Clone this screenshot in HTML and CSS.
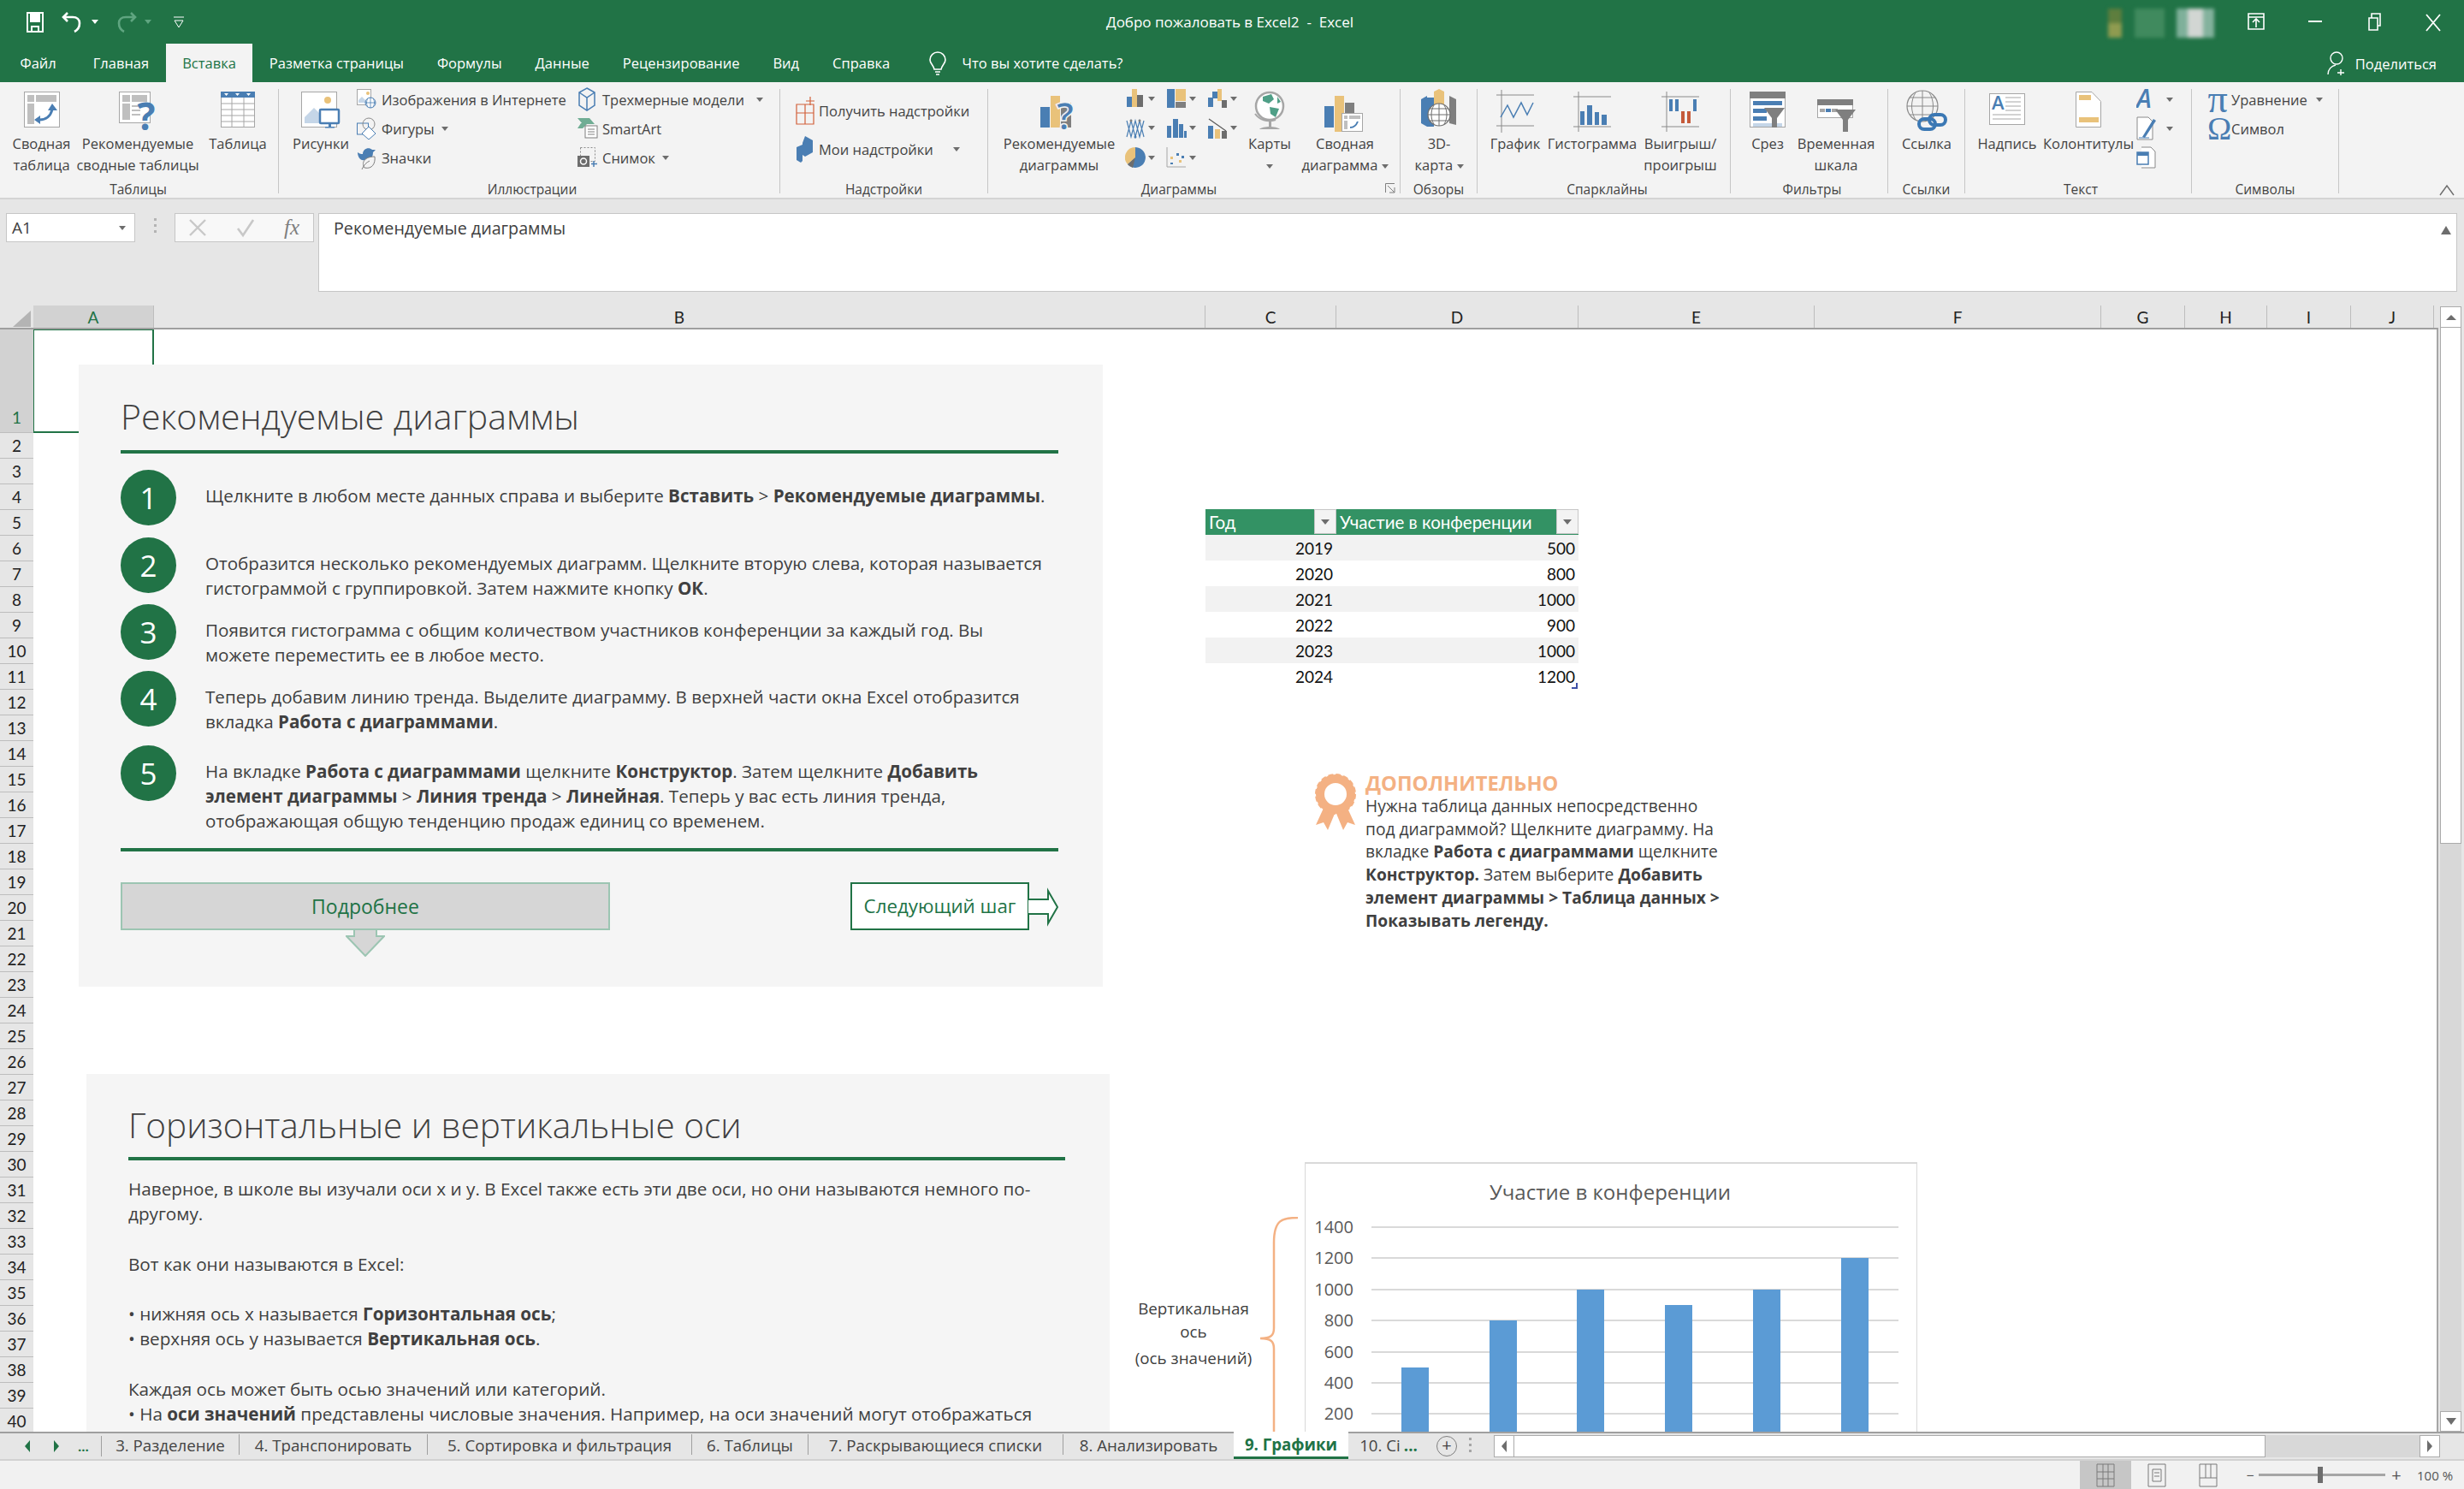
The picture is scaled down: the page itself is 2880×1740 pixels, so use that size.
FILE: index.html
```html
<!DOCTYPE html>
<html lang="ru">
<head>
    <meta charset="UTF-8">
    <title>Добро пожаловать в Excel2 - Excel</title>
    <link rel="stylesheet" href="styles.css">
</head>
<body>
    <!-- title bar -->
    <div class="titlebar">
        <div class="qat">
            <svg width="22" height="26" viewBox="0 0 22 26"><path d="M2 2h18v22H2z" fill="none" stroke="#fff" stroke-width="2"/><path d="M5 2h12v11H5z" fill="#fff"/><path d="M7 18h8v6H7z" fill="none" stroke="#fff" stroke-width="2"/></svg>
            <svg width="26" height="28" viewBox="0 0 26 28"><path d="M7 3 2 8l5 5M3 8h10c5 0 8 3 8 7s-2 8-6 10" fill="none" stroke="#fff" stroke-width="2.6"/></svg>
            <span class="caret caret-white"></span>
            <svg class="qat-dim" width="26" height="28" viewBox="0 0 26 28"><path d="M19 3l5 5-5 5M23 8H13C8 8 5 11 5 15s2 8 6 10" fill="none" stroke="#5fa580" stroke-width="2.6"/></svg>
            <span class="caret caret-dim"></span>
            <svg class="qat-more" width="14" height="14" viewBox="0 0 14 14"><path d="M1 1h12M2 5h10L7 13z" fill="none" stroke="#fff"/></svg>
        </div>
        <div class="doc-title">Добро пожаловать в Excel2&nbsp; - &nbsp;Excel</div>
        <div class="account">
            <span class="blur blur-a"></span>
            <span class="blur blur-b"></span>
            <span class="blur blur-c"></span>
        </div>
        <div class="win-btns">
            <svg width="22" height="22" viewBox="0 0 22 22"><path d="M2 2h18v18H2zM2 6h18M11 18V9M7 12l4-4 4 4" fill="none" stroke="#fff" stroke-width="1.6"/></svg>
            <svg width="22" height="22" viewBox="0 0 22 22"><path d="M3 11h16" stroke="#fff" stroke-width="2"/></svg>
            <svg width="22" height="22" viewBox="0 0 22 22"><path d="M5 7h10v14H5zM8 7V2h10v14h-3" fill="none" stroke="#fff" stroke-width="1.6"/></svg>
            <svg width="22" height="24" viewBox="0 0 22 24"><path d="M3 3l16 19M19 3 3 22" stroke="#fff" stroke-width="1.8"/></svg>
        </div>
    </div>

    <!-- ribbon tabs -->
    <div class="tabs">
        <div class="tab tab-file">Файл</div>
        <div class="tab">Главная</div>
        <div class="tab tab-active">Вставка</div>
        <div class="tab">Разметка страницы</div>
        <div class="tab">Формулы</div>
        <div class="tab">Данные</div>
        <div class="tab">Рецензирование</div>
        <div class="tab">Вид</div>
        <div class="tab">Справка</div>
        <div class="tell-me">
            <svg width="24" height="30" viewBox="0 0 24 30"><path d="M12 2a9 9 0 0 0-9 9c0 4 4 6 5 11h8c1-5 5-7 5-11a9 9 0 0 0-9-9zM9 25h6M10 28h4" fill="none" stroke="#fff" stroke-width="1.6"/></svg>
            <span>Что вы хотите сделать?</span>
        </div>
        <div class="share">
            <svg width="24" height="30" viewBox="0 0 24 30"><circle cx="12" cy="9" r="7" fill="none" stroke="#fff" stroke-width="1.4"/><path d="M2 28c0-6 4-10 9-11M17 22v7M13 26h8" fill="none" stroke="#fff" stroke-width="1.4"/></svg>
            <span>Поделиться</span>
        </div>
    </div>

    <!-- ribbon -->
    <div class="ribbon">
        <div class="group g-tables">
            <div class="group-body">
                <div class="big w81">
                    <svg width="44" height="52" viewBox="0 0 44 52"><rect x="1.5" y="3.5" width="41" height="41" class="ln"/><path d="M5 7h8v8H5zM15 7h24v8H15zM5 17h8v24H5z" class="gr"/><path d="M19 36c8 0 13-4 15-12" fill="none" stroke="#4a7eb3" stroke-width="3"/><path d="M34 17l6 8h-11zM20 31v10l-7-5z" class="bl"/></svg>
                    <span>Сводная<br>таблица</span>
                </div>
                <div class="big w144">
                    <svg width="46" height="52" viewBox="0 0 46 52"><rect x="1.5" y="3.5" width="36" height="36" class="ln"/><path d="M5 7h9v8H5zM16 7h18v8H16zM5 17h9v19H5z" class="gr"/><path d="M16 19h12v2H16zM16 24h10v2H16zM16 29h10v2H16z" class="gr"/><text x="33" y="48" class="qmark">?</text></svg>
                    <span>Рекомендуемые<br>сводные таблицы</span>
                </div>
                <div class="big w90">
                    <svg width="42" height="52" viewBox="0 0 42 52"><rect x="1.5" y="3.5" width="39" height="41" class="ln"/><path d="M1 3h40v7H1z" class="bl"/><path d="M5 5h5l-2.500 3zM18 5h5l-2.500 3zM31 5h5l-2.500 3z" fill="#fff"/><path d="M14 10v34M28 10v34M2 17h38M2 24h38M2 31h38M2 38h38" stroke="#a6a6a6" fill="none"/></svg>
                    <span>Таблица</span>
                </div>
            </div>
            <div class="group-label">Таблицы</div>
        </div>

        <div class="group g-illus">
            <div class="group-body">
                <div class="big w84">
                    <svg width="48" height="52" viewBox="0 0 48 52"><rect x="1.500" y="3.500" width="41" height="41" class="ln"/><circle cx="32" cy="13" r="4" class="yl"/><path d="M5 40v-7l11-11 8 8v10z" fill="#c5d6e8"/><rect x="23" y="24" width="22" height="16" rx="1" fill="#fff" stroke="#4a7eb3" stroke-width="2.500"/><path d="M33 40h3v4h4v1.500h-11V44h4z" class="bl"/></svg>
                    <span>Рисунки</span>
                </div>
                <div class="small-col c258">
                    <div class="small">
                        <svg width="24" height="24" viewBox="0 0 24 24"><rect x="0.500" y="0.500" width="16" height="18" class="ln"/><circle cx="13" cy="5" r="2" class="yl"/><path d="M2 16v-3l4-4 4 4v3z" fill="#c5d6e8"/><circle cx="16" cy="16" r="6" fill="#fff" stroke="#4a7eb3"/><path d="M10 16h12M16 10v12M13 11c-2 3-2 7 0 10M19 11c2 3 2 7 0 10" fill="none" stroke="#4a7eb3" stroke-width=".8"/></svg>
                        <span>Изображения в Интернете</span>
                    </div>
                    <div class="small">
                        <svg width="24" height="26" viewBox="0 0 24 26"><rect x="0.500" y="7" width="13" height="13" fill="none" stroke="#4a7eb3"/><circle cx="14" cy="8" r="7" fill="none" stroke="#8a8a8a"/><path d="M14 11l8 8-8 7-8-7z" fill="#fff" stroke="#4a7eb3"/></svg>
                        <span>Фигуры</span><span class="caret"></span>
                    </div>
                    <div class="small">
                        <svg width="24" height="28" viewBox="0 0 24 28"><path d="M1 8c3 2 4 2 6 2 0-6 7-9 11-5l4 0-3 3c0 8-5 10-13 9C3 16 1 12 1 8z" class="bl"/><path d="M9 26c-4-6 0-13 12-13 1 8-3 15-12 13zM6 28c2-5 5-8 9-10" fill="#f3f3f3" stroke="#7f7f7f"/></svg>
                        <span>Значки</span>
                    </div>
                </div>
                <div class="small-col c230">
                    <div class="small">
                        <svg width="24" height="28" viewBox="0 0 24 28"><path d="M11 1l9 5v15l-9 6-9-6V6zM2 6l9 6 9-6M11 12v15" fill="none" stroke="#4a7eb3" stroke-width="1.500"/></svg>
                        <span>Трехмерные модели</span><span class="caret caret-far"></span>
                    </div>
                    <div class="small">
                        <svg width="24" height="24" viewBox="0 0 24 24"><path d="M0 0h14l6 7H6zM6 12H0l4-6h8z" fill="#70ad94"/><rect x="9" y="9" width="14" height="14" fill="#fff" stroke="#7f7f7f"/><path d="M12 13h8M12 16h8M12 19h8" stroke="#7f7f7f"/></svg>
                        <span>SmartArt</span>
                    </div>
                    <div class="small">
                        <svg width="24" height="26" viewBox="0 0 24 26"><rect x="3.500" y="1.500" width="17" height="16" fill="none" stroke="#8a8a8a" stroke-dasharray="2 2"/><rect x="0" y="11" width="14" height="13" fill="#6d6d6d"/><circle cx="7" cy="17.500" r="3.500" fill="none" stroke="#fff" stroke-width="1.500"/><path d="M19 17v7M16 20.500h7" stroke="#4a7eb3" stroke-width="1.500"/></svg>
                        <span>Снимок</span><span class="caret"></span>
                    </div>
                </div>
            </div>
            <div class="group-label">Иллюстрации</div>
        </div>

        <div class="group g-addins">
            <div class="group-body addin-body">
                <div class="small addin">
                    <svg width="24" height="36" viewBox="0 0 24 36"><path d="M1 10h10v10H1zM11 10h10v10H11zM1 20h10v13H1zM11 20h10v13H11z" fill="none" stroke="#d2603a" stroke-width="1.200"/><path d="M17 1v10M12 6h10" stroke="#d2603a" stroke-width="1.200"/></svg>
                    <span>Получить надстройки</span>
                </div>
                <div class="small addin">
                    <svg width="24" height="34" viewBox="0 0 24 34"><path d="M11 1l9 5v14l-9 5-3-2V9z" class="bl"/><path d="M1 14l7-3v19l-2 2-5-3z" class="bl"/></svg>
                    <span>Мои надстройки</span><span class="caret caret-far2"></span>
                </div>
            </div>
            <div class="group-label">Надстройки</div>
        </div>

        <div class="group g-charts">
            <div class="group-body">
                <div class="big w132">
                    <svg width="46" height="52" viewBox="0 0 46 52"><path d="M1 21h11v24H1z" class="bl"/><path d="M13 8h11v37H13z" class="yl"/><path d="M25 16h12v29H25z" fill="#7f7f7f"/><text x="30" y="48" class="qmark qmark-out">?</text></svg>
                    <span>Рекомендуемые<br>диаграммы</span>
                </div>
                <div class="gallery">
                    <div class="gal-item"><svg width="24" height="24" viewBox="0 0 24 24"><path d="M2 10h6v12H2z" class="bl"/><path d="M8 1h6v21H8z" class="yl"/><path d="M14 8h7v14h-7z" fill="#6d6d6d"/></svg><span class="caret"></span></div>
                    <div class="gal-item"><svg width="24" height="24" viewBox="0 0 24 24"><path d="M1 1h9v22H1z" class="bl"/><path d="M11 1h12v14H11z" class="yl"/><path d="M11 16h12v7H11z" fill="#7f7f7f"/></svg><span class="caret"></span></div>
                    <div class="gal-item"><svg width="24" height="24" viewBox="0 0 24 24"><path d="M1 22V11h5V4h6v8H7v10z" class="bl"/><path d="M12 1h5v14h-5z" class="yl"/><path d="M17 14h6v9h-6z" fill="#6d6d6d"/></svg><span class="caret"></span></div>
                    <div class="gal-item"><svg width="24" height="24" viewBox="0 0 24 24"><path d="M2 22 7 3l5 19 5-19 5 19M2 3l5 19 5-19 5 19 5-19" fill="none" stroke="#4a7eb3" stroke-width="1.200"/><circle cx="7" cy="3" r="1.500" fill="#7f7f7f"/><circle cx="17" cy="3" r="1.500" fill="#7f7f7f"/><circle cx="12" cy="22" r="1.500" class="bl"/></svg><span class="caret"></span></div>
                    <div class="gal-item"><svg width="24" height="24" viewBox="0 0 24 24"><path d="M1 9h5v14H1zM8 1h6v22H8zM15 7h5v16h-5zM21 15h3v8h-3z" class="bl"/></svg><span class="caret"></span></div>
                    <div class="gal-item"><svg width="24" height="24" viewBox="0 0 24 24"><path d="M1 9h6v15H1z" class="bl"/><path d="M9 13h6v11H9z" class="yl"/><path d="M17 15h6v9h-6z" fill="#6d6d6d"/><path d="M2 1l20 14" stroke="#595959" stroke-width="1.200"/></svg><span class="caret"></span></div>
                    <div class="gal-item"><svg width="24" height="24" viewBox="0 0 24 24"><path d="M12 12V0a12 12 0 1 1-9 20z" class="bl"/><path d="M12 12 3 20A12 12 0 0 1 12 0z" class="yl"/><path d="M12 12 3 20a12 12 0 0 0 6 4z" fill="#6d6d6d"/></svg><span class="caret"></span></div>
                    <div class="gal-item"><svg width="24" height="24" viewBox="0 0 24 24"><path d="M1 0v23h22" fill="none" stroke="#a6a6a6"/><path d="M5 11h3v3H5zM15 15h3v3h-3z" class="yl"/><path d="M5 18h3v2H5zM12 7h3v3h-3zM18 10h3v3h-3z" class="bl"/></svg><span class="caret"></span></div>
                </div>
                <div class="big w76">
                    <svg width="40" height="52" viewBox="0 0 40 52"><circle cx="20" cy="20" r="16" fill="#fff" stroke="#a6a6a6" stroke-width="2.500"/><path d="M12 9l10-3 3 6-6 5-7-3zM20 21l11 2-4 10-6-4zM29 9l4 6-4 2z" fill="#4f9f87"/><path d="M3 29c5 7 14 10 24 7" fill="none" stroke="#a6a6a6" stroke-width="2"/><path d="M19 38h3v6h-3zM8 47c4-4 20-4 24 0z" fill="#a6a6a6"/></svg>
                    <span>Карты<br><span class="caret"></span></span>
                </div>
                <div class="big w100">
                    <svg width="50" height="52" viewBox="0 0 50 52"><path d="M1 20h11v25H1z" class="bl"/><path d="M13 8h11v42H13z" class="yl"/><path d="M25 16h11v12H25z" fill="#7f7f7f"/><rect x="21.500" y="28.500" width="24" height="21" class="ln"/><path d="M24 31h4v4h-4zM30 31h13v4H30zM24 37h4v10h-4z" class="gr"/><path d="M31 45c4 0 7-2 9-7" fill="none" stroke="#4a7eb3" stroke-width="2"/></svg>
                    <span>Сводная<br>диаграмма <span class="caret"></span></span>
                </div>
            </div>
            <div class="group-label">Диаграммы</div>
            <svg class="launcher" width="12" height="12" viewBox="0 0 12 12"><path d="M.5 11V.5H11M3 3l8 8M5 11h6V5" fill="none" stroke="#7f7f7f"/></svg>
        </div>

        <div class="group g-tours">
            <div class="group-body">
                <div class="big w90">
                    <svg width="44" height="52" viewBox="0 0 44 52"><path d="M1 12l7-4v36l-7-4z" class="bl"/><path d="M16 3l6-3 6 3v24H16z" class="yl"/><path d="M34 8l8 4v30l-8-2z" fill="#7f7f7f"/><path d="M8 10h8v34H8z" class="bl"/><circle cx="22" cy="30" r="13" fill="#fff" stroke="#6d6d6d" stroke-width="1.200"/><path d="M9 30h26M22 17v26M16 19c-4 6-4 16 0 22M28 19c4 6 4 16 0 22M11 23h22M11 37h22" fill="none" stroke="#6d6d6d"/></svg>
                    <span>3D-<br>карта <span class="caret"></span></span>
                </div>
            </div>
            <div class="group-label">Обзоры</div>
        </div>

        <div class="group g-spark">
            <div class="group-body">
                <div class="big w72">
                    <svg width="46" height="52" viewBox="0 0 46 52"><path d="M1 8h44M1 44h44M7 2v50" stroke="#8a8a8a" fill="none" transform="translate(0 -1)"/><path d="M6 34l8-14 7 14 9-17 7 14 7-14" fill="none" stroke="#4a7eb3" stroke-width="1.500" transform="translate(0 -1)"/></svg>
                    <span>График</span>
                </div>
                <div class="big w108">
                    <svg width="46" height="52" viewBox="0 0 46 52"><path d="M1 9h44M1 44h44M7 3v47" stroke="#8a8a8a" fill="none"/><path d="M9 26h5v16H9zM17 19h6v23h-6zM26 27h5v15h-5zM34 30h6v12h-6z" class="bl"/></svg>
                    <span>Гистограмма</span>
                </div>
                <div class="big w98">
                    <svg width="46" height="52" viewBox="0 0 46 52"><path d="M1 9h44M1 44h44M7 3v47" stroke="#8a8a8a" fill="none"/><path d="M10 12h4v14h-4zM17 12h4v14h-4zM38 12h4v14h-4z" class="bl"/><path d="M24 26h4v14h-4zM31 26h4v14h-4z" fill="#c55a3a"/></svg>
                    <span>Выигрыш/<br>проигрыш</span>
                </div>
            </div>
            <div class="group-label">Спарклайны</div>
        </div>

        <div class="group g-filters">
            <div class="group-body">
                <div class="big w72">
                    <svg width="44" height="52" viewBox="0 0 44 52"><rect x="1.500" y="3.500" width="41" height="41" class="ln"/><path d="M1 3h42v8H1z" fill="#7f7f7f"/><path d="M5 14h34v5H5zM5 23h16v5H5zM5 32h16v5H5z" class="bl"/><path d="M5 40h34v4H5z" fill="#c5d6e8"/><path d="M18 22h24l-9 12v11h-6V34z" fill="#7f7f7f"/></svg>
                    <span>Срез</span>
                </div>
                <div class="big w88">
                    <svg width="46" height="52" viewBox="0 0 46 52"><rect x="1.500" y="12.500" width="41" height="21" class="ln"/><path d="M1 12h42v7H1z" fill="#7f7f7f"/><path d="M4 23h6v4H4zM18 23h7v4h-7z" fill="#a6a6a6"/><path d="M11 23h6v4h-6z" class="bl"/><path d="M22 24h24l-9 12v14h-6V36z" fill="#7f7f7f"/></svg>
                    <span>Временная<br>шкала</span>
                </div>
            </div>
            <div class="group-label">Фильтры</div>
        </div>

        <div class="group g-links">
            <div class="group-body">
                <div class="big w90">
                    <svg width="50" height="52" viewBox="0 0 50 52"><circle cx="20" cy="20" r="18" fill="none" stroke="#8a8a8a" stroke-width="1.200"/><path d="M2 20h36M20 2v36M12 4c-6 10-6 22 0 32M28 4c6 10 6 22 0 32M5 10h30M5 30h30" fill="none" stroke="#8a8a8a"/><rect x="16" y="35" width="19" height="12" rx="6" fill="none" stroke="#3b78b4" stroke-width="4"/><rect x="28" y="30" width="19" height="12" rx="6" fill="none" stroke="#3b78b4" stroke-width="4"/></svg>
                    <span>Ссылка</span>
                </div>
            </div>
            <div class="group-label">Ссылки</div>
        </div>

        <div class="group g-text">
            <div class="group-body">
                <div class="big w82">
                    <svg width="44" height="52" viewBox="0 0 44 52"><rect x="1.500" y="5.500" width="41" height="36" class="ln"/><text x="4" y="24" class="letter-a">A</text><path d="M20 10h18M20 15h18M20 20h18M20 25h18M5 30h33M5 35h33" stroke="#a6a6a6"/></svg>
                    <span>Надпись</span>
                </div>
                <div class="big w108">
                    <svg width="32" height="52" viewBox="0 0 32 52"><path d="M1.500 3.500H20l10.500 11v30H1.500z" fill="#fff" stroke="#a6a6a6"/><path d="M5 7h14v6H5zM5 33h23v6H5z" class="yl"/></svg>
                    <span>Колонтитулы</span>
                </div>
                <div class="small-col c58">
                    <div class="small small-tight"><svg width="24" height="28" viewBox="0 0 24 28"><text x="0" y="24" class="letter-art">A</text></svg><span class="caret"></span></div>
                    <div class="small small-tight"><svg width="24" height="28" viewBox="0 0 24 28"><path d="M1 1h13l5 5v21H1z" fill="#fff" stroke="#8a8a8a"/><path d="M7 24 20 3l3 2L10 25z" class="bl"/><path d="M3 25h12" stroke="#4a7eb3"/></svg><span class="caret"></span></div>
                    <div class="small small-tight"><svg width="24" height="28" viewBox="0 0 24 28"><path d="M6 2h11l5 5v19H6" fill="#fff" stroke="#8a8a8a"/><rect x="1" y="8" width="13" height="14" fill="#fff" stroke="#4a7eb3" stroke-width="1.500"/><path d="M1 8h13v4H1z" class="bl"/></svg></div>
                </div>
            </div>
            <div class="group-label">Текст</div>
        </div>

        <div class="group g-symbols">
            <div class="group-body">
                <div class="small-col c154">
                    <div class="small small-sym"><span class="sym sym-pi">π</span><span>Уравнение</span><span class="caret caret-far3"></span></div>
                    <div class="small small-sym"><span class="sym">Ω</span><span>Символ</span></div>
                </div>
            </div>
            <div class="group-label">Символы</div>
        </div>

        <svg class="collapse" width="18" height="14" viewBox="0 0 18 14"><path d="M1 13 9 2l8 11" fill="none" stroke="#6d6d6d" stroke-width="1.400"/></svg>
    </div>

    <!-- formula bar -->
    <div class="formula-bar">
        <div class="name-box"><span>A1</span><span class="caret"></span></div>
        <div class="fb-dots"></div>
        <div class="fx-box">
            <svg width="24" height="24" viewBox="0 0 24 24"><path d="M3 3l18 18M21 3 3 21" stroke="#c8c8c8" stroke-width="2.400"/></svg>
            <svg width="24" height="24" viewBox="0 0 24 24"><path d="M3 13l6 8L21 3" fill="none" stroke="#c8c8c8" stroke-width="2.600"/></svg>
            <span class="fx">fx</span>
        </div>
        <div class="formula-input">
            <span>Рекомендуемые диаграммы</span>
            <span class="fb-up"></span>
        </div>
    </div>

    <!-- sheet -->
    <div class="sheet-wrap">
        <div class="sheet-main">
            <div class="col-heads">
                <div class="corner"><span class="corner-tri"></span></div>
                <div class="col col-a col-sel">A</div>
                <div class="col col-b">B</div>
                <div class="col col-c">C</div>
                <div class="col col-d">D</div>
                <div class="col col-e">E</div>
                <div class="col col-f">F</div>
                <div class="col col-g">G</div>
                <div class="col col-h">H</div>
                <div class="col col-i">I</div>
                <div class="col col-j">J</div>
            </div>
            <div class="sheet-body">
                <div class="row-heads">
                    <div class="rh rh-first">1</div>
                    <div class="rh">2</div><div class="rh">3</div><div class="rh">4</div><div class="rh">5</div>
                    <div class="rh">6</div><div class="rh">7</div><div class="rh">8</div><div class="rh">9</div>
                    <div class="rh">10</div><div class="rh">11</div><div class="rh">12</div><div class="rh">13</div>
                    <div class="rh">14</div><div class="rh">15</div><div class="rh">16</div><div class="rh">17</div>
                    <div class="rh">18</div><div class="rh">19</div><div class="rh">20</div><div class="rh">21</div>
                    <div class="rh">22</div><div class="rh">23</div><div class="rh">24</div><div class="rh">25</div>
                    <div class="rh">26</div><div class="rh">27</div><div class="rh">28</div><div class="rh">29</div>
                    <div class="rh">30</div><div class="rh">31</div><div class="rh">32</div><div class="rh">33</div>
                    <div class="rh">34</div><div class="rh">35</div><div class="rh">36</div><div class="rh">37</div>
                    <div class="rh">38</div><div class="rh">39</div><div class="rh">40</div>
                </div>
                <div class="canvas">
                    <div class="cell-a1"></div>

                    <div class="card card-one">
                        <h1 class="card-title">Рекомендуемые диаграммы</h1>
                        <div class="rule"></div>
                        <div class="steps">
                            <div class="step">
                                <div class="num">1</div>
                                <p>Щелкните в любом месте данных справа и выберите <b>Вставить</b> &gt; <b>Рекомендуемые диаграммы</b>.</p>
                            </div>
                            <div class="step">
                                <div class="num">2</div>
                                <p>Отобразится несколько рекомендуемых диаграмм. Щелкните вторую слева, которая называется<br>гистограммой с группировкой. Затем нажмите кнопку <b>ОК</b>.</p>
                            </div>
                            <div class="step">
                                <div class="num">3</div>
                                <p>Появится гистограмма с общим количеством участников конференции за каждый год. Вы<br>можете переместить ее в любое место.</p>
                            </div>
                            <div class="step">
                                <div class="num">4</div>
                                <p>Теперь добавим линию тренда. Выделите диаграмму. В верхней части окна Excel отобразится<br>вкладка <b>Работа с диаграммами</b>.</p>
                            </div>
                            <div class="step">
                                <div class="num">5</div>
                                <p>На вкладке <b>Работа с диаграммами</b> щелкните <b>Конструктор</b>. Затем щелкните <b>Добавить</b><br><b>элемент диаграммы</b> &gt; <b>Линия тренда</b> &gt; <b>Линейная</b>. Теперь у вас есть линия тренда,<br>отображающая общую тенденцию продаж единиц со временем.</p>
                            </div>
                        </div>
                        <div class="rule"></div>
                        <div class="card-nav">
                            <div class="more">
                                <div class="more-btn">Подробнее</div>
                                <svg width="46" height="31" viewBox="0 0 46 31"><path d="M10 0v7H1l22 23L45 7h-9V0" fill="#d6d6d6" stroke="#9cc5b2" stroke-width="2"/></svg>
                            </div>
                            <div class="next">
                                <div class="next-btn">Следующий шаг</div>
                                <svg width="36" height="56" viewBox="0 0 36 56"><path d="M0 20h23V10l11 19-11 19V37H0" fill="#fff" stroke="#217346" stroke-width="2"/></svg>
                            </div>
                        </div>
                    </div>

                    <table class="data-table">
                        <tr class="head">
                            <th class="th-year">Год<span class="filter"></span></th>
                            <th class="th-val">Участие в конференции<span class="filter"></span></th>
                        </tr>
                        <tr class="odd"><td>2019</td><td>500</td></tr>
                        <tr><td>2020</td><td>800</td></tr>
                        <tr class="odd"><td>2021</td><td>1000</td></tr>
                        <tr><td>2022</td><td>900</td></tr>
                        <tr class="odd"><td>2023</td><td>1000</td></tr>
                        <tr><td>2024</td><td class="last-cell">1200</td></tr>
                    </table>

                    <div class="note">
                        <svg class="medal" width="48" height="68" viewBox="0 0 48 68"><path d="M12 36 1 60l9-3 5 9 10-24zM36 36l11 24-9-3-5 9-10-24z" fill="#f4b183"/><circle cx="24" cy="24" r="18" fill="none" stroke="#f4b183" stroke-width="10"/><circle cx="24" cy="24" r="23" fill="none" stroke="#f4b183" stroke-width="2" stroke-dasharray="6 3"/></svg>
                        <div>
                            <div class="note-title">ДОПОЛНИТЕЛЬНО</div>
                            <div class="note-text">Нужна таблица данных непосредственно<br>под диаграммой? Щелкните диаграмму. На<br>вкладке <b>Работа с диаграммами</b> щелкните<br><b>Конструктор.</b> Затем выберите <b>Добавить</b><br><b>элемент диаграммы &gt; Таблица данных &gt;</b><br><b>Показывать легенду.</b></div>
                        </div>
                    </div>

                    <div class="card card-two">
                        <h1 class="card-title">Горизонтальные и вертикальные оси</h1>
                        <div class="rule"></div>
                        <p class="axis-text">Наверное, в школе вы изучали оси x и y. В Excel также есть эти две оси, но они называются немного по-<br>другому.<br><br>Вот как они называются в Excel:<br><br>• нижняя ось x называется <b>Горизонтальная ось</b>;<br>• верхняя ось y называется <b>Вертикальная ось</b>.<br><br>Каждая ось может быть осью значений или категорий.<br>• На <b>оси значений</b> представлены числовые значения. Например, на оси значений могут отображаться</p>
                    </div>

                    <div class="axis-label">
                        <span>Вертикальная</span>
                        <span>ось</span>
                        <span class="axis-label-sub">(ось значений)</span>
                    </div>
                    <svg class="brace" width="54" height="260" viewBox="0 0 54 260"><path d="M48 1C30 1 20 3 20 30v100c0 8-3 12-16 12 13 0 16 4 16 12v106" fill="none" stroke="#f4b183" stroke-width="2.500"/></svg>

                    <div class="chart">
                        <svg width="714" height="340" viewBox="0 0 714 340">
                            <text x="356" y="42" class="chart-title">Участие в конференции</text>
                            <g class="grid-lines">
                                <path d="M77 74h616M77 110h616M77 147h616M77 183h616M77 220h616M77 256h616M77 292h616"/>
                            </g>
                            <g class="ticks">
                                <text x="56" y="81">1400</text>
                                <text x="56" y="117">1200</text>
                                <text x="56" y="154">1000</text>
                                <text x="56" y="190">800</text>
                                <text x="56" y="227">600</text>
                                <text x="56" y="263">400</text>
                                <text x="56" y="299">200</text>
                            </g>
                            <g class="bars">
                                <rect x="112" y="238" width="32" height="102"/>
                                <rect x="215" y="183" width="32" height="157"/>
                                <rect x="317" y="147" width="32" height="193"/>
                                <rect x="420" y="165" width="32" height="175"/>
                                <rect x="523" y="147" width="32" height="193"/>
                                <rect x="626" y="110" width="32" height="230"/>
                            </g>
                        </svg>
                    </div>
                </div>
            </div>
        </div>
        <div class="vscroll">
            <div class="vs-btn"><span class="tri-up"></span></div>
            <div class="vs-thumb"></div>
            <div class="vs-track"></div>
            <div class="vs-btn"><span class="tri-down"></span></div>
        </div>
    </div>

    <!-- sheet tabs -->
    <div class="sheet-tabs">
        <div class="tab-nav">
            <span class="nav-l"></span>
            <span class="nav-r"></span>
            <span class="nav-dots">...</span>
        </div>
        <div class="stab s3">3. Разделение</div>
        <div class="stab s4">4. Транспонировать</div>
        <div class="stab s5">5. Сортировка и фильтрация</div>
        <div class="stab s6">6. Таблицы</div>
        <div class="stab s7">7. Раскрывающиеся списки</div>
        <div class="stab s8">8. Анализировать</div>
        <div class="stab s9 stab-active">9. Графики</div>
        <div class="stab s10">10. Сі <b>...</b></div>
        <div class="add-sheet">+</div>
        <div class="tab-split"></div>
        <div class="hscroll">
            <div class="hs-btn"><span class="nav-l nav-grey"></span></div>
            <div class="hs-thumb"></div>
            <div class="hs-track"></div>
            <div class="hs-btn"><span class="nav-r nav-grey"></span></div>
        </div>
    </div>

    <!-- status bar -->
    <div class="statusbar">
        <div class="view view-active"><svg width="22" height="28" viewBox="0 0 22 28"><path d="M1 1h20v26H1zM1 10h20M1 18h20M8 1v26M14 1v26" fill="none" stroke="#7a7a7a"/></svg></div>
        <div class="view"><svg width="22" height="28" viewBox="0 0 22 28"><path d="M1 1h20v26H1zM6 7h10v14H6zM8 11h6M8 15h6" fill="none" stroke="#7a7a7a"/></svg></div>
        <div class="view"><svg width="22" height="28" viewBox="0 0 22 28"><path d="M1 1h20v26H1zM1 17h20M8 1v16M14 1v16" fill="none" stroke="#7a7a7a"/></svg></div>
        <div class="zoom-minus">−</div>
        <div class="slider"><span class="knob"></span></div>
        <div class="zoom-plus">+</div>
        <div class="zoom-val">100 %</div>
    </div>
</body>
</html>
```

FILE: styles.css
```css
* {
    box-sizing: border-box;
}
body {
    margin: 0;
    width: 2880px;
    height: 1740px;
    overflow: hidden;
    display: flex;
    flex-direction: column;
    background-color: #f1f1f1;
    font-family: "Open Sans", "Noto Sans", sans-serif;
    color: #404040;
}
svg {
    display: block;
    flex: none;
}

/* svg icon colours */
.ln { fill: #fff; stroke: #a6a6a6; }
.gr { fill: #bfbfbf; }
.bl { fill: #4a7eb3; }
.yl { fill: #e9c27a; }
.qmark {
    font-size: 44px;
    font-weight: 700;
    fill: #4a7eb3;
    text-anchor: middle;
}
.qmark-out {
    stroke: #f3f3f3;
    stroke-width: 1.5px;
}
.letter-a {
    font-size: 22px;
    font-weight: 600;
    fill: #4a7eb3;
}
.letter-art {
    font-size: 30px;
    font-weight: 600;
    font-style: italic;
    fill: #4a7eb3;
}

.caret {
    display: inline-block;
    width: 0;
    height: 0;
    border-left: 4px solid transparent;
    border-right: 4px solid transparent;
    border-top: 5px solid #6d6d6d;
    vertical-align: middle;
}
.caret-white { border-top-color: #fff; }
.caret-dim { border-top-color: #5fa580; }

/* title bar */
.titlebar {
    height: 51px;
    background-color: #217346;
    display: flex;
    align-items: center;
    position: relative;
    color: #fff;
}
.qat {
    display: flex;
    align-items: center;
    padding-left: 30px;
    width: 1293px;
}
.qat svg:nth-child(2) { margin-left: 20px; }
.qat .caret { margin-left: 9px; }
.qat-dim { margin-left: 19px; }
.qat-more { margin-left: 25px; }
.doc-title {
    width: 300px;
    font-size: 17px;
    white-space: nowrap;
}
.account {
    display: flex;
    margin-left: 871px;
    width: 124px;
    height: 38px;
    filter: blur(2px);
}
.blur { display: block; height: 34px; margin-top: 3px; }
.blur-a { width: 16px; background: linear-gradient(#5e7e3e 50%, #8f9b50 50%); }
.blur-b { width: 36px; margin-left: 15px; background-color: #408a5e; }
.blur-c { width: 44px; margin-left: 14px; background: linear-gradient(90deg, #7fb09a 30%, #d2d6d3 30%, #d2d6d3 70%, #84b29d 70%); }
.win-btns {
    display: flex;
    margin-left: 38px;
    gap: 47px;
}

/* ribbon tabs */
.tabs {
    height: 45px;
    background-color: #217346;
    display: flex;
    align-items: stretch;
    padding-left: 4px;
    color: #fff;
    font-size: 16.500px;
    position: relative;
}
.tab {
    padding: 0 19.500px;
    display: flex;
    align-items: center;
    white-space: nowrap;
}
.tab-file { margin-right: 4px; }
.tab-active {
    background-color: #f3f3f3;
    color: #217346;
}
.tell-me {
    display: flex;
    align-items: center;
    gap: 17px;
    margin-left: 24px;
}
.share {
    position: absolute;
    right: 32px;
    top: 8px;
    display: flex;
    align-items: center;
    gap: 10px;
}

/* ribbon */
.ribbon {
    height: 137px;
    background-color: #f3f3f3;
    border-bottom: 2px solid #d4d4d4;
    display: flex;
    position: relative;
    font-size: 16.500px;
    color: #444;
}
.group {
    height: 122px;
    margin-top: 8px;
    border-right: 1px solid #c6c6c6;
    position: relative;
}
.group-body {
    display: flex;
    height: 108px;
}
.group-label {
    line-height: 18px;
    text-align: center;
    font-size: 15.500px;
    white-space: nowrap;
}
.g-tables { width: 326px; padding-left: 8px; }
.g-illus { width: 586px; padding-left: 7px; }
.g-addins { width: 243px; }
.g-charts { width: 482px; padding-left: 17px; }
.g-tours { width: 90px; }
.g-spark { width: 296px; padding-left: 8px; }
.g-filters { width: 184px; padding-left: 7px; }
.g-links { width: 90px; }
.g-text { width: 265px; padding-left: 8px; }
.g-symbols { width: 172px; }
.g-tables .group-label { padding-right: 10px; }
.g-charts .group-label { padding-right: 52px; }
.g-text .group-label { padding-right: 2px; }

.big {
    display: flex;
    flex-direction: column;
    align-items: center;
    text-align: center;
    flex: none;
    line-height: 25px;
}
.big span { white-space: nowrap; margin-top: -1px; }
.big .caret { margin-top: 0; }
.w72 { width: 72px; }
.w76 { width: 76px; }
.w81 { width: 81px; }
.w82 { width: 82px; }
.w84 { width: 84px; }
.w88 { width: 88px; }
.w90 { width: 90px; }
.w98 { width: 98px; }
.w100 { width: 100px; }
.w108 { width: 108px; }
.w132 { width: 132px; }
.w144 { width: 144px; }

.small-col {
    margin-top: -5px;
    flex: none;
}
.c258 { width: 258px; }
.c230 { width: 230px; }
.c58 { width: 58px; margin-left: 2px; }
.c154 { width: 154px; margin-left: 18px; }
.small {
    height: 34px;
    display: flex;
    align-items: center;
    gap: 5px;
    white-space: nowrap;
    position: relative;
}
.small .caret { margin-left: 3px; }
.small .caret-far { margin-left: 9px; }
.small .caret-far2 { margin-left: 20px; }
.small .caret-far3 { margin-left: 6px; }
.small-tight { gap: 8px; }
.small-sym { gap: 4px; }
.sym {
    width: 24px;
    font-family: "Liberation Serif", serif;
    font-size: 38px;
    line-height: 34px;
    color: #4a7eb3;
    text-align: center;
}
.sym-pi { font-size: 46px; }
.addin-body {
    flex-direction: column;
    padding: 3px 0 0 18px;
}
.addin { height: 45px; gap: 3px; }
.gallery {
    display: grid;
    grid-template-columns: repeat(3, 48px);
    grid-auto-rows: 34.500px;
    width: 144px;
    height: 108px;
    flex: none;
    margin: -6px -13px 0 11px;
}
.gal-item {
    display: flex;
    align-items: center;
    gap: 3px;
}
.launcher {
    position: absolute;
    right: 5px;
    bottom: 0;
}
.collapse {
    position: absolute;
    right: 11px;
    bottom: 2px;
}

/* formula bar */
.formula-bar {
    height: 124px;
    background-color: #e6e6e6;
    display: flex;
    align-items: flex-start;
    padding: 16px 0 0 7px;
}
.name-box {
    width: 151px;
    height: 34px;
    background-color: #fff;
    border: 1px solid #c6c6c6;
    display: flex;
    align-items: center;
    justify-content: space-between;
    padding: 0 10px 0 6px;
    font-size: 19px;
}
.fb-dots {
    width: 46px;
    height: 34px;
    background: repeating-linear-gradient(#b4b4b4 0 3px, transparent 3px 7px) center 6px / 3px 20px no-repeat;
}
.fx-box {
    width: 163px;
    height: 34px;
    background-color: #f8f8f8;
    border: 1px solid #c6c6c6;
    display: flex;
    align-items: center;
    justify-content: space-between;
    padding: 0 16px 0 14px;
}
.fx {
    font-family: "Liberation Serif", serif;
    font-style: italic;
    font-size: 25px;
    color: #7f7f7f;
}
.formula-input {
    width: 2500px;
    margin-left: 5px;
    height: 92px;
    background-color: #fff;
    border: 1px solid #c6c6c6;
    padding: 5px 17px;
    font-size: 19.700px;
    line-height: 24px;
    position: relative;
}
.fb-up {
    position: absolute;
    right: 6px;
    top: 14px;
    width: 0;
    height: 0;
    border-left: 6px solid transparent;
    border-right: 6px solid transparent;
    border-bottom: 10px solid #6d6d6d;
}

/* sheet */
.sheet-wrap {
    height: 1316px;
    display: flex;
}
.sheet-main {
    width: 2850px;
    display: flex;
    flex-direction: column;
}
.col-heads {
    height: 28px;
    display: flex;
    background-color: #e6e6e6;
    border-bottom: 2px solid #9f9f9f;
    font-family: "Lato", "Open Sans", sans-serif;
    font-size: 19px;
    color: #222;
}
.corner {
    width: 39px;
    position: relative;
}
.corner-tri {
    position: absolute;
    left: 15px;
    top: 6px;
    width: 0;
    height: 0;
    border-bottom: 19px solid #b4b4b4;
    border-left: 21px solid transparent;
}
.col {
    display: flex;
    align-items: center;
    justify-content: center;
    border-right: 1px solid #bdbdbd;
    flex: none;
}
.col-sel {
    background-color: #d2d2d2;
    color: #217346;
}
.col-a { width: 141px; }
.col-b { width: 1229px; }
.col-c { width: 153px; }
.col-d { width: 283px; }
.col-e { width: 276px; }
.col-f { width: 335px; }
.col-g { width: 98px; }
.col-h { width: 96px; }
.col-i { width: 98px; }
.col-j { width: 97px; }

.sheet-body {
    flex: 1;
    display: flex;
    min-height: 0;
}
.row-heads {
    width: 39px;
    flex: none;
    background-color: #e6e6e6;
    overflow: hidden;
    font-family: "Lato", "Open Sans", sans-serif;
    font-size: 19px;
    color: #222;
}
.rh {
    height: 30px;
    border-bottom: 1px solid #bdbdbd;
    text-align: center;
    line-height: 30px;
}
.rh-first {
    height: 121px;
    line-height: 206px;
    background-color: #d2d2d2;
    color: #217346;
}

/* free canvas over the sheet */
.canvas {
    flex: 1;
    position: relative;
    overflow: hidden;
    background-color: #fff;
    border-right: 2px solid #a6a6a6;
}
.cell-a1 {
    position: absolute;
    left: -1px;
    top: -1px;
    width: 142px;
    height: 122px;
    border: 2px solid #217346;
}
.card {
    position: absolute;
    background-color: #f5f5f5;
}
.card-one {
    left: 53px;
    top: 41px;
    width: 1197px;
    height: 727px;
    padding: 30px 52px 0 49px;
}
.card-two {
    left: 62px;
    top: 870px;
    width: 1196px;
    height: 700px;
    padding: 30px 52px 0 49px;
}
.card-title {
    margin: 0 0 10px;
    font-size: 41px;
    font-weight: 300;
    line-height: 60px;
    color: #404040;
    white-space: nowrap;
}
.card-two .card-title { margin-bottom: 7px; font-size: 40.500px; }
.rule {
    height: 4px;
    background-color: #217346;
}
.steps {
    display: grid;
    grid-template-rows: 79px 78px 78px 87px 120px;
    margin-top: 19px;
}
.step {
    display: flex;
    gap: 34px;
    align-items: flex-start;
}
.num {
    width: 65px;
    height: 65px;
    border-radius: 50%;
    background-color: #217346;
    color: #fff;
    font-size: 35px;
    line-height: 65px;
    text-align: center;
    flex: none;
}
.step p {
    margin: 0;
    padding-top: 16px;
    font-size: 20.600px;
    line-height: 29px;
    white-space: nowrap;
}
.card-nav {
    display: flex;
    justify-content: space-between;
    align-items: flex-start;
    margin-top: 36px;
}
.more {
    width: 572px;
    display: flex;
    flex-direction: column;
    align-items: center;
}
.more-btn {
    width: 100%;
    height: 56px;
    background-color: #d6d6d6;
    border: 2px solid #9cc5b2;
    color: #217346;
    font-size: 23px;
    text-align: center;
    line-height: 52px;
}
.next {
    display: flex;
    margin-right: -1px;
}
.next-btn {
    width: 209px;
    height: 56px;
    background-color: #fff;
    border: 2px solid #217346;
    color: #217346;
    font-size: 22.300px;
    text-align: center;
    line-height: 52px;
    white-space: nowrap;
}
.next svg { margin-left: -1px; }
.axis-text {
    margin: 19px 0 0;
    font-size: 20.700px;
    line-height: 29.200px;
    white-space: nowrap;
}

/* data table */
.data-table {
    position: absolute;
    left: 1370px;
    top: 210px;
    width: 436px;
    border-collapse: collapse;
    font-family: "Lato", "Open Sans", sans-serif;
    font-size: 19px;
    color: #111;
}
.data-table th, .data-table td {
    height: 30px;
    padding: 0 4px;
    text-align: right;
}
.data-table td:first-child, .data-table th:first-child { width: 153px; }
.data-table th {
    background-color: #339264;
    color: #fff;
    font-weight: 400;
    font-size: 20.500px;
    text-align: left;
    position: relative;
    white-space: nowrap;
}
.odd td { background-color: #f2f2f2; }
.filter {
    position: absolute;
    right: 0;
    top: 0;
    width: 26px;
    height: 29px;
    background-color: #f3f3f3;
    border: 1px solid #c6c6c6;
}
.filter::after {
    content: "";
    position: absolute;
    left: 7px;
    top: 11px;
    border-left: 5px solid transparent;
    border-right: 5px solid transparent;
    border-top: 6px solid #6d6d6d;
}
.last-cell { position: relative; }
.last-cell::after {
    content: "";
    position: absolute;
    right: 1px;
    bottom: 0;
    width: 5px;
    height: 5px;
    border-right: 2px solid #3f51a8;
    border-bottom: 2px solid #3f51a8;
}

/* note */
.note {
    position: absolute;
    left: 1498px;
    top: 516px;
    display: flex;
    gap: 11px;
}
.medal { margin-top: 3px; }
.note-title {
    font-size: 23.700px;
    font-weight: 700;
    line-height: 28px;
    color: #f4b183;
}
.note-text {
    font-size: 19.200px;
    line-height: 26.700px;
    white-space: nowrap;
}

/* chart + axis label */
.axis-label {
    position: absolute;
    left: 1286px;
    top: 1131px;
    width: 140px;
    display: flex;
    flex-direction: column;
    align-items: center;
    font-size: 18.800px;
    line-height: 27px;
    white-space: nowrap;
}
.axis-label-sub { margin-top: 4px; }
.brace {
    position: absolute;
    left: 1430px;
    top: 1037px;
}
.chart {
    position: absolute;
    left: 1486px;
    top: 973px;
    width: 716px;
    height: 340px;
    background-color: #fff;
    border: 1px solid #d9d9d9;
    border-top-width: 2px;
}
.chart-title {
    font-size: 24px;
    fill: #595959;
    text-anchor: middle;
}
.grid-lines path {
    stroke: #d9d9d9;
    stroke-width: 2px;
    fill: none;
}
.ticks text {
    font-size: 20px;
    fill: #595959;
    text-anchor: end;
}
.bars rect {
    fill: #5b9bd5;
}

/* vertical scrollbar */
.vscroll {
    width: 30px;
    background-color: #e6e6e6;
    display: flex;
    flex-direction: column;
    padding: 1px 3px 0 2px;
}
.vs-btn {
    height: 25px;
    background-color: #fff;
    border: 1px solid #ababab;
    display: flex;
    align-items: center;
    justify-content: center;
    flex: none;
}
.vs-btn:last-child { height: 24px; }
.vs-thumb {
    height: 603px;
    background-color: #fff;
    border: 1px solid #ababab;
    border-top: none;
    flex: none;
}
.vs-track {
    flex: 1;
    background-color: #d8d8d8;
}
.tri-up, .tri-down {
    width: 0;
    height: 0;
    border-left: 6px solid transparent;
    border-right: 6px solid transparent;
}
.tri-up { border-bottom: 6px solid #6d6d6d; }
.tri-down { border-top: 8px solid #6d6d6d; }

/* sheet tabs */
.sheet-tabs {
    height: 34px;
    background-color: #e6e6e6;
    border-top: 2px solid #9f9f9f;
    border-bottom: 2px solid #d2d2d2;
    display: flex;
    align-items: stretch;
    font-size: 18.700px;
    color: #444;
    white-space: nowrap;
}
.tab-nav {
    width: 119px;
    display: flex;
    align-items: center;
    padding-left: 29px;
    border-right: 1px solid #9f9f9f;
    margin: 3px 0;
}
.nav-l, .nav-r {
    width: 0;
    height: 0;
    border-top: 7px solid transparent;
    border-bottom: 7px solid transparent;
}
.nav-l { border-right: 6px solid #217346; }
.nav-r { border-left: 6px solid #217346; margin-left: 28px; }
.nav-grey { margin-left: 0; border-left-color: #6d6d6d; border-right-color: #6d6d6d; }
.nav-dots {
    margin-left: 22px;
    font-weight: 700;
    color: #217346;
    font-size: 15px;
}
.stab {
    display: flex;
    align-items: center;
    justify-content: center;
    border-right: 1px solid #9f9f9f;
    margin: 1px 0 5px;
    flex: none;
}
.s3 { width: 161px; }
.s4 { width: 220px; }
.s5 { width: 309px; }
.s6 { width: 136px; }
.s7 { width: 298px; }
.s8 { width: 199px; border-right: none; }
.s9 { width: 134px; }
.s10 { width: 94px; border-right: none; }
.s10 b { margin-left: 4px; color: #217346; }
.stab-active {
    margin: -2px 0 0;
    background-color: #fff;
    color: #217346;
    font-weight: 700;
    border-right: none;
    border-bottom: 3px solid #217346;
}
.add-sheet {
    width: 24px;
    height: 24px;
    margin: 3px 0 0 9px;
    border: 1px solid #7f7f7f;
    border-radius: 50%;
    text-align: center;
    line-height: 20px;
    font-size: 20px;
    flex: none;
}
.tab-split {
    width: 43px;
    margin: 5px 0;
    background: repeating-linear-gradient(#a6a6a6 0 3px, transparent 3px 7px) 14px 0 / 3px 100% no-repeat;
    flex: none;
}
.hscroll {
    width: 1106px;
    display: flex;
    flex: none;
    margin: 2px 0;
}
.hs-btn {
    width: 24px;
    background-color: #fff;
    border: 1px solid #ababab;
    display: flex;
    align-items: center;
    justify-content: center;
    flex: none;
}
.hs-thumb {
    width: 878px;
    background-color: #fff;
    border: 1px solid #ababab;
    border-left: none;
    flex: none;
}
.hs-track {
    flex: 1;
    background-color: #d8d8d8;
}

/* status bar */
.statusbar {
    height: 33px;
    background-color: #f1f1f1;
    display: flex;
    align-items: center;
    padding-left: 2431px;
    font-size: 16px;
    color: #555;
    white-space: nowrap;
}
.view {
    width: 60px;
    height: 33px;
    display: flex;
    align-items: center;
    justify-content: center;
    flex: none;
}
.view-active {
    background-color: #c6c6c6;
}
.zoom-minus { margin-left: 9px; width: 20px; text-align: center; }
.slider {
    width: 148px;
    height: 3px;
    background-color: #a6a6a6;
    position: relative;
    flex: none;
}
.knob {
    position: absolute;
    left: 69px;
    top: -8px;
    width: 6px;
    height: 19px;
    background-color: #6d6d6d;
}
.zoom-plus { width: 20px; margin-left: 3px; text-align: center; font-size: 20px; }
.zoom-val { margin-left: 14px; font-size: 15px; }
```
